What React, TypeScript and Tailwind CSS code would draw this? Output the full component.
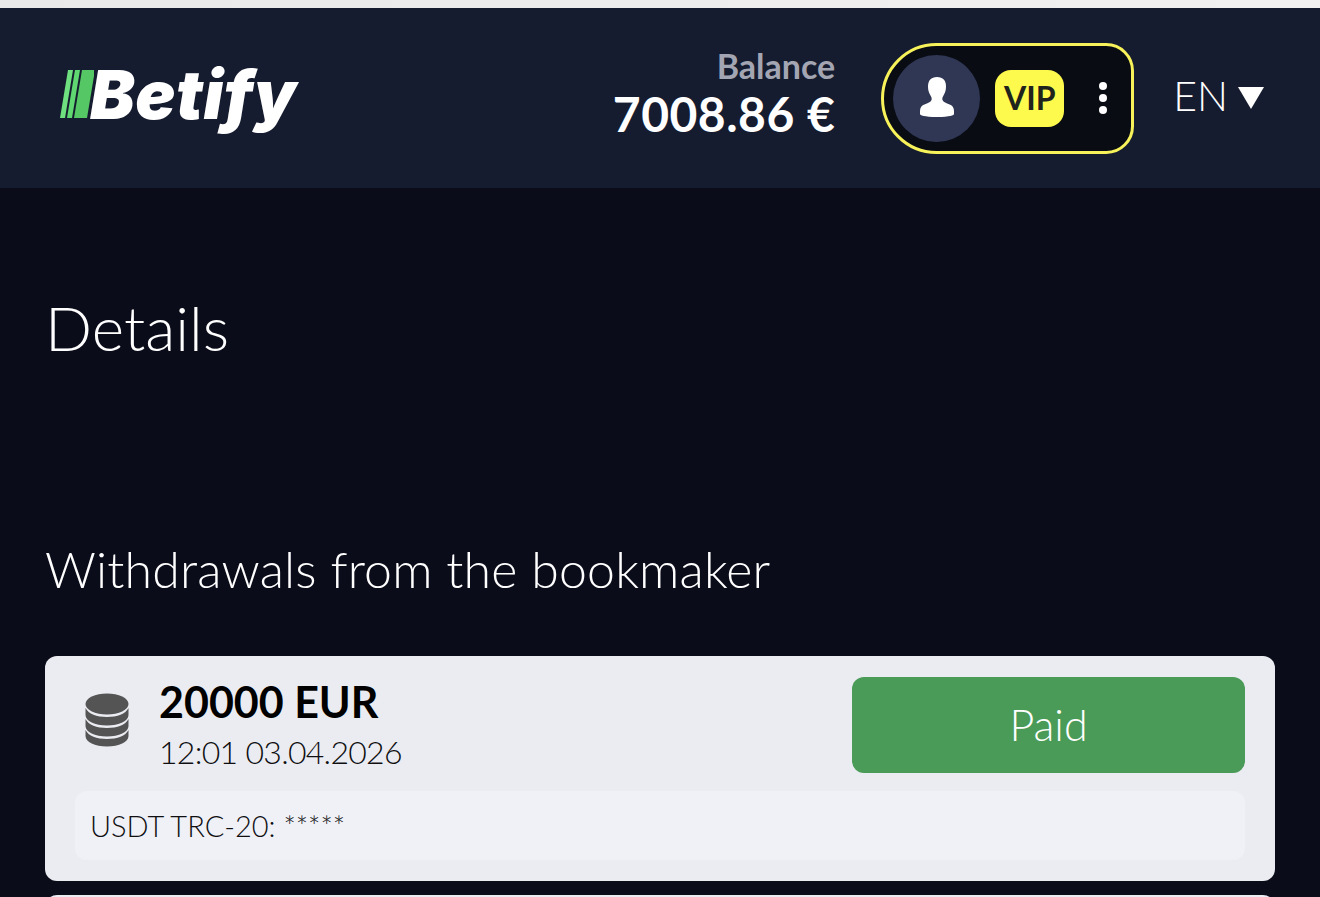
import React from 'react';

const font = { fontFamily: '"Lato", "Noto Sans", sans-serif' };

function Logo() {
  return (
    <div className="mt-[-8px] flex items-center">
      <svg width="34" height="50" viewBox="0 0 34 50" className="mr-[-4px]">
        <polygon points="8,1 13,1 5,49 0,49" fill="#6fe07f" />
        <polygon points="15,1 20,1 12,49 7,49" fill="#5fd872" />
        <polygon points="22,1 35,1 27,49 14,49" fill="#55c765" />
      </svg>
      <span className="font-['Inter'] text-[67px] font-black italic leading-none tracking-[0.5px] text-white">Betify</span>
    </div>
  );
}

function UserIcon() {
  return (
    <svg width="34" height="42" viewBox="0 0 34 42" fill="#fff">
      <path d="M17 0c6 0 9 3.500 9 9.500 0 4-1 6.500-2.500 9-1 1.700-1.500 3-1 4.500.6 1.800 3 3 6.500 4.300 3.500 1.300 5 3.300 5 6.700v3c0 1-4 3-17 3S0 38 0 37v-3c0-3.400 1.500-5.400 5-6.700 3.500-1.300 6-2.500 6.500-4.300.5-1.500 0-2.800-1-4.500C9 16 8 13.500 8 9.500 8 3.500 11 0 17 0z" />
    </svg>
  );
}

function CoinsIcon() {
  return (
    <svg width="44" height="54" viewBox="0 0 44 54" fill="#545454">
      <ellipse cx="22" cy="11" rx="21.500" ry="10.500" />
      <path d="M.5 15c3 6 11 9 21.500 9s18.500-3 21.500-9v7c0 6-9.500 10.500-21.500 10.500S.5 28 .5 22z" />
      <path d="M.5 26c3 6 11 9 21.500 9s18.500-3 21.500-9v7c0 6-9.500 10.500-21.500 10.500S.5 39 .5 33z" />
      <path d="M.5 37c3 6 11 9 21.500 9s18.500-3 21.500-9v6c0 6-9.500 10.500-21.500 10.500S.5 49 .5 43z" />
    </svg>
  );
}

export default function App() {
  return (
    <div className="h-[897px] overflow-hidden bg-[#0a0c1a]" style={font}>
      <div className="h-2 bg-gradient-to-r from-[#e9e9e9] to-[#f1f1f1]" />
      <header className="flex h-[180px] items-center bg-[#161c2f] pl-[60px] pr-[56px]">
        <Logo />
        <div className="ml-auto mr-[46px] flex flex-col items-end">
          <span className="mt-[-10px] text-[34px] font-bold leading-[38px] text-[#a3a6b2]">Balance</span>
          <span className="mt-[4px] text-[48px] font-bold leading-[50px] tracking-[0.5px] text-white">7008.86 €</span>
        </div>
        <div className="flex h-[111px] w-[253px] items-center rounded-l-[56px] rounded-r-[28px] border-[3px] border-[#f7f25a] bg-[#0a0c14] pl-[9px]">
          <div className="flex h-[87px] w-[87px] items-center justify-center rounded-full bg-[#2f3754]">
            <UserIcon />
          </div>
          <div className="ml-[15px] flex h-[57px] w-[69px] items-center justify-center rounded-[16px] bg-[#fdf94d] text-[32px] font-bold text-[#20221c]">VIP</div>
          <div className="ml-[35px] flex flex-col gap-[4px]">
            <div className="h-2 w-2 rounded-full bg-white" />
            <div className="h-2 w-2 rounded-full bg-white" />
            <div className="h-2 w-2 rounded-full bg-white" />
          </div>
        </div>
        <div className="ml-[39px] flex items-center gap-[10px] text-[41px] font-light leading-[46px] text-white">
          <span className="mt-[-4px]">EN</span>
          <svg width="26" height="22" viewBox="0 0 26 22" fill="#fff"><polygon points="0,0 26,0 13,22" /></svg>
        </div>
      </header>
      <main className="px-[45px]">
        <h1 className="mt-[105px] text-[62px] font-light leading-[68px] text-white">Details</h1>
        <h2 className="mt-[178px] text-[50px] font-light leading-[60px] tracking-[0.17px] text-white">Withdrawals from the bookmaker</h2>
        <section className="mt-[57px] h-[225px] w-[1230px] rounded-[12px] bg-[#ebecf1] px-[30px] pt-[21px]">
          <div className="flex h-[96px] items-start">
            <div className="ml-[10px] mt-[16px]"><CoinsIcon /></div>
            <div className="ml-[30px]">
              <div className="text-[43px] font-bold leading-[50px] text-black">20000 EUR</div>
              <div className="mt-[2px] text-[32px] font-light leading-[46px] tracking-[-0.7px] text-[#0f0f12]">12:01 03.04.2026</div>
            </div>
            <div className="ml-auto flex h-[96px] w-[393px] items-center justify-center rounded-[12px] bg-[#4a9b58] text-[43px] font-light text-white">Paid</div>
          </div>
          <div className="mt-[18px] flex h-[69px] items-center rounded-[12px] bg-[#f0f1f6] px-[15px] text-[29px] font-light text-[#0f0f12]">USDT TRC-20: *****</div>
        </section>
        <div className="mt-[14px] h-10 w-[1230px] rounded-[12px] bg-[#ebecf1]" />
      </main>
    </div>
  );
}
